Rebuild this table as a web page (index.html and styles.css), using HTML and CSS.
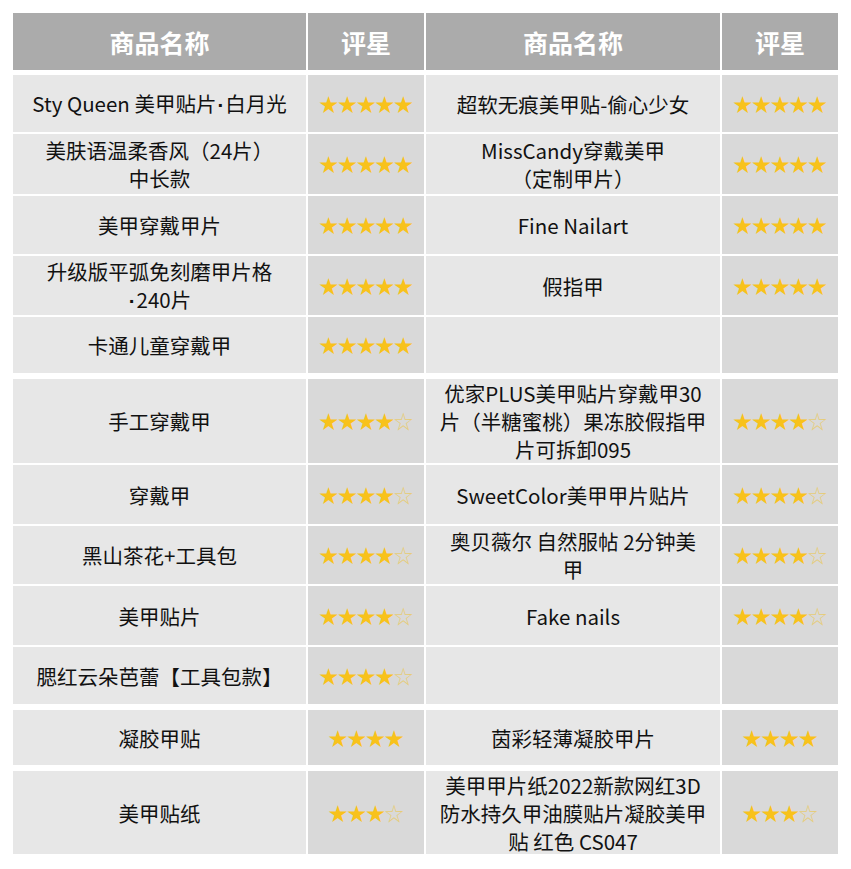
FILE: index.html
```html
<!DOCTYPE html>
<html lang="zh-CN">
<head>
<meta charset="utf-8">
<link rel="stylesheet" href="styles.css">
</head>
<body>
<div class="table">
  <div class="group head">
    <div class="cell th">商品名称</div>
    <div class="cell th">评星</div>
    <div class="cell th">商品名称</div>
    <div class="cell th">评星</div>
  </div>

  <div class="group g1">
    <div class="cell name"><span>Sty Queen 美甲贴片<span class="dot">·</span>白月光</span></div>
    <div class="cell star"><span class="on">★★★★★</span></div>
    <div class="cell name">超软无痕美甲贴-偷心少女</div>
    <div class="cell star"><span class="on">★★★★★</span></div>

    <div class="cell name">美肤语温柔香风（24片）<br>中长款</div>
    <div class="cell star"><span class="on">★★★★★</span></div>
    <div class="cell name">MissCandy穿戴美甲<br>（定制甲片）</div>
    <div class="cell star"><span class="on">★★★★★</span></div>

    <div class="cell name">美甲穿戴甲片</div>
    <div class="cell star"><span class="on">★★★★★</span></div>
    <div class="cell name">Fine Nailart</div>
    <div class="cell star"><span class="on">★★★★★</span></div>

    <div class="cell name"><span>升级版平弧免刻磨甲片格<br><span class="dot">·</span>240片</span></div>
    <div class="cell star"><span class="on">★★★★★</span></div>
    <div class="cell name">假指甲</div>
    <div class="cell star"><span class="on">★★★★★</span></div>

    <div class="cell name">卡通儿童穿戴甲</div>
    <div class="cell star"><span class="on">★★★★★</span></div>
    <div class="cell name"></div>
    <div class="cell star"></div>
  </div>

  <div class="group g2">
    <div class="cell name">手工穿戴甲</div>
    <div class="cell star"><span class="on">★★★★</span><span class="off">☆</span></div>
    <div class="cell name">优家PLUS美甲贴片穿戴甲30<br>片（半糖蜜桃）果冻胶假指甲<br>片可拆卸095</div>
    <div class="cell star"><span class="on">★★★★</span><span class="off">☆</span></div>

    <div class="cell name">穿戴甲</div>
    <div class="cell star"><span class="on">★★★★</span><span class="off">☆</span></div>
    <div class="cell name">SweetColor美甲甲片贴片</div>
    <div class="cell star"><span class="on">★★★★</span><span class="off">☆</span></div>

    <div class="cell name">黑山茶花+工具包</div>
    <div class="cell star"><span class="on">★★★★</span><span class="off">☆</span></div>
    <div class="cell name">奥贝薇尔 自然服帖 2分钟美<br>甲</div>
    <div class="cell star"><span class="on">★★★★</span><span class="off">☆</span></div>

    <div class="cell name">美甲贴片</div>
    <div class="cell star"><span class="on">★★★★</span><span class="off">☆</span></div>
    <div class="cell name">Fake nails</div>
    <div class="cell star"><span class="on">★★★★</span><span class="off">☆</span></div>

    <div class="cell name">腮红云朵芭蕾【工具包款】</div>
    <div class="cell star"><span class="on">★★★★</span><span class="off">☆</span></div>
    <div class="cell name"></div>
    <div class="cell star"></div>
  </div>

  <div class="group g3">
    <div class="cell name">凝胶甲贴</div>
    <div class="cell star"><span class="on">★★★★</span></div>
    <div class="cell name">茵彩轻薄凝胶甲片</div>
    <div class="cell star"><span class="on">★★★★</span></div>
  </div>

  <div class="group g4">
    <div class="cell name">美甲贴纸</div>
    <div class="cell star"><span class="on">★★★</span><span class="off">☆</span></div>
    <div class="cell name">美甲甲片纸2022新款网红3D<br>防水持久甲油膜贴片凝胶美甲<br>贴 红色 CS047</div>
    <div class="cell star"><span class="on">★★★</span><span class="off">☆</span></div>
  </div>
</div>
</body>
</html>
```

FILE: styles.css
```css
html, body {
  margin: 0;
  padding: 0;
  background: #ffffff;
}

body {
  font-family: "Noto Sans CJK SC", "Noto Sans", sans-serif;
  color: #111111;
}

.table {
  padding: 13px 0 0 13px;
  width: 825px;
}

.group {
  display: grid;
  grid-template-columns: 293px 116px 294px 116px;
  column-gap: 2px;
  row-gap: 2px;
  margin-top: 6px;
}

.group.head {
  margin-top: 0;
  grid-template-rows: 57px;
  margin-bottom: -1px;
}

.g1 { grid-template-rows: 57px 60px 58px 59px 56px; }
.g2 { grid-template-rows: 84px 59px 58px 59px 57px; }
.g3 { grid-template-rows: 55px; }
.g4 { grid-template-rows: 83px; }

.cell {
  display: flex;
  align-items: center;
  justify-content: center;
  text-align: center;
  white-space: nowrap;
  font-size: 20.5px;
  line-height: 28px;
}

.th {
  background: #ababab;
  color: #ffffff;
  font-weight: 700;
  font-size: 25px;
}

.name {
  background: #e7e7e7;
}

.dot {
  font-family: "Liberation Sans", sans-serif;
  font-weight: 700;
  padding: 0 1px;
}

.star {
  background: #d9d9d9;
  font-size: 19px;
  letter-spacing: -0.3px;
}

.on {
  color: #f8c21b;
}

.off {
  color: #e6cc78;
}
```
